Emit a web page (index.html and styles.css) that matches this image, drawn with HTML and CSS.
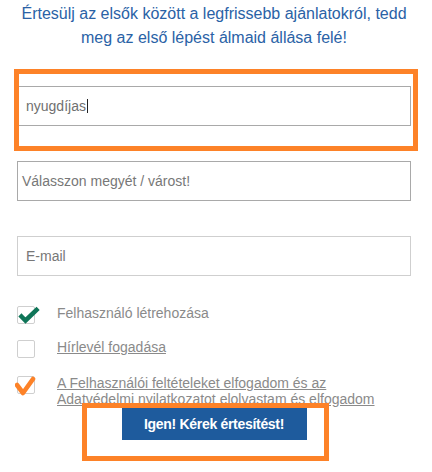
FILE: index.html
```html
<!DOCTYPE html>
<html lang="hu">
<head>
<meta charset="utf-8">
<link rel="stylesheet" href="styles.css">
</head>
<body>
<div class="wrap">
  <p class="title">Értesülj az elsők között a legfrissebb ajánlatokról, tedd meg az első lépést álmaid állása felé!</p>
  <div class="field field-text"><span class="value">nyugdíjas</span><span class="caret"></span></div>
  <div class="field field-select"><span class="ph">Válasszon megyét / várost!</span></div>
  <div class="field field-mail"><span class="ph">E-mail</span></div>

  <div class="row row-1">
    <span class="box">
      <svg class="chk" width="26" height="22" viewBox="0 0 26 22"><path d="M5.5 11.5 L9.5 15.5 L20.5 5" fill="none" stroke="#0f7558" stroke-width="4.5" stroke-linecap="square" stroke-linejoin="miter"/></svg>
    </span>
    <span class="label">Felhasználó létrehozása</span>
  </div>
  <div class="row row-2">
    <span class="box"></span>
    <span class="label link">Hírlevél fogadása</span>
  </div>
  <div class="row row-3">
    <span class="box">
      <svg class="chk-o" width="24" height="24" viewBox="0 0 24 24"><path d="M2 10 L8 18 L18 4" fill="none" stroke="#fd8228" stroke-width="4.6" stroke-linecap="round" stroke-linejoin="round"/></svg>
    </span>
    <span class="label link terms">A Felhasználói feltételeket elfogadom és az Adatvédelmi nyilatkozatot elolvastam és elfogadom</span>
  </div>
  <div class="actions">
    <button class="btn">Igen! Kérek értesítést!</button>
  </div>

  <div class="hl hl-1"></div>
  <div class="hl hl-2"></div>
</div>
</body>
</html>
```
FILE: styles.css
```css
html, body {
  margin: 0;
  padding: 0;
  background: #fff;
}
body {
  font-family: "Liberation Sans", Arial, sans-serif;
}
.wrap {
  position: relative;
  width: 394px;
  padding: 2px 21px 0 17px;
  height: 470px;
}
.title {
  margin: 0 0 36px;
  text-align: center;
  font-size: 16px;
  line-height: 24px;
  color: #2a62a6;
}
.field {
  box-sizing: border-box;
  height: 40px;
  border: 1px solid #a9a9a9;
  margin-bottom: 35px;
  display: flex;
  align-items: center;
  font-size: 14px;
  color: #777;
}
.field-text {
  padding-left: 8px;
}
.field-select {
  padding-left: 4px;
}
.field-mail {
  padding-left: 8px;
  border-color: #cfcfcf;
  margin-bottom: 30px;
}
.value {
  color: #707070;
}
.caret {
  display: inline-block;
  width: 1px;
  height: 14px;
  background: #222;
  margin-left: 1px;
}
.row {
  display: flex;
  align-items: flex-start;
}
.row-1 {
  margin-bottom: 16px;
}
.row-2 {
  margin-bottom: 18px;
}
.box {
  position: relative;
  box-sizing: border-box;
  width: 18px;
  height: 18px;
  border: 1px solid #cfcfcf;
  border-radius: 2px;
  flex: none;
  margin-right: 22px;
  background: #fff;
}
.chk {
  position: absolute;
  left: -2px;
  top: -2px;
}
.chk-o {
  position: absolute;
  left: -3px;
  top: -2px;
}
.label {
  font-size: 14px;
  line-height: 16px;
  color: #8a8a8a;
  margin-top: -1px;
}
.link {
  text-decoration: underline;
}
.terms {
  width: 335px;
}
.actions {
  display: flex;
  justify-content: center;
  margin-top: 1px;
}
.btn {
  width: 185px;
  height: 32px;
  border: 0;
  margin: 0;
  padding: 0;
  background: #1e5b9d;
  color: #fff;
  font-family: "Liberation Sans", Arial, sans-serif;
  font-weight: bold;
  font-size: 14px;
  letter-spacing: -0.3px;
}
.hl {
  position: absolute;
  box-sizing: border-box;
  border: 5px solid #fd8228;
  pointer-events: none;
}
.hl-1 {
  left: 14px;
  top: 69px;
  width: 404px;
  height: 82px;
}
.hl-2 {
  left: 82px;
  top: 403px;
  width: 247px;
  height: 58px;
}
```
